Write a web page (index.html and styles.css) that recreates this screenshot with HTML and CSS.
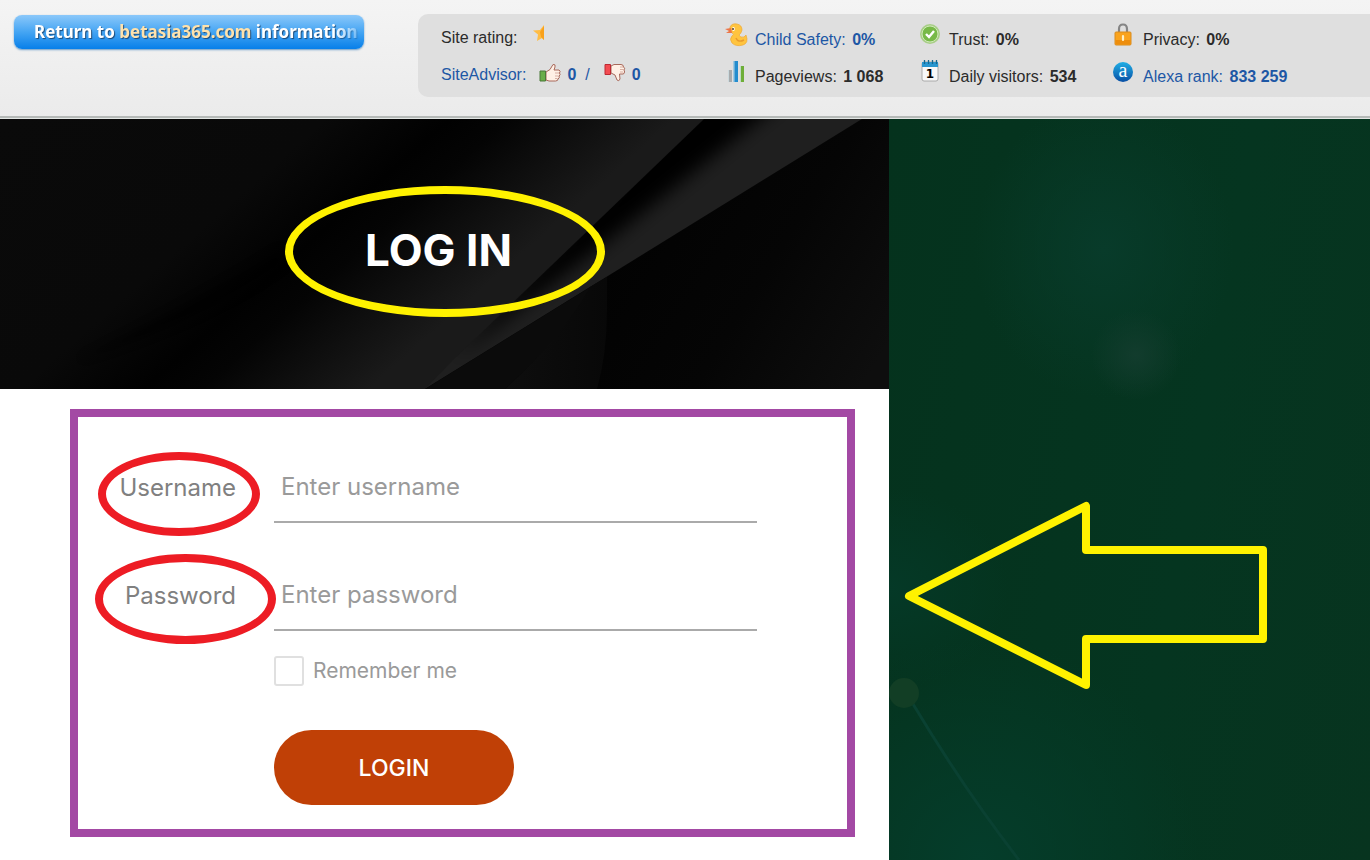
FILE: index.html
```html
<!DOCTYPE html>
<html lang="en">
<head>
<meta charset="utf-8">
<title>Log in</title>
<meta name="viewport" content="width=device-width, initial-scale=1">
<link rel="stylesheet" href="styles.css">
</head>
<body>
<header class="topbar">
  <a class="return-link" href="#"><span class="return-text">Return to <span class="domain">betasia365.com</span> information</span></a>
  <div class="stats">
    <div class="column">
      <div class="line">Site rating:
        <svg class="star" width="14" height="18" viewBox="0 0 14 18"><path d="M1 6.500 8 6 12 1V16L10 14 5 17 6 10.500Z" fill="#ffbd45"/><path d="M8 8 12 2V16L9 13Z" fill="#f9a11b"/></svg>
      </div>
      <div class="line advisor"><a href="#">SiteAdvisor:</a>
        <svg class="thumb" width="22" height="20" viewBox="0 0 22 20"><path d="M7 9 11 6.500 14 1.500Q17 1 16 4L15 7H20Q22 8 20.500 10Q22 12 20 13Q21 15 19 16Q19 18 16.500 18H10L7 17Z" fill="#fff0e5" stroke="#a8695b"/><path d="M16 10H20M16 13H19.500M16 15.500H18.500" stroke="#c69487" stroke-width=".7"/><path d="M1 8H6.500V18H1Z" fill="#69ae48" stroke="#4b7939"/></svg>
        <a href="#"><b>0</b></a><a class="slash" href="#">/</a>
        <svg class="thumb" width="22" height="20" viewBox="0 0 22 20"><path d="M7 3 10 1.500H17Q19.500 1.500 19.500 4Q21.500 5 20 7Q21.500 9 19.500 11H15.500L16 16Q15 19 13 17L11 12 7 10Z" fill="#fff0e5" stroke="#a8695b"/><path d="M16 4H19M16 6.500H19.500M16 9H19" stroke="#c69487" stroke-width=".7"/><path d="M1 1.500H6.500V11.500H1Z" fill="#f34b51" stroke="#bd2932"/></svg>
        <a href="#"><b>0</b></a>
      </div>
    </div>
    <div class="column">
      <div class="line">
        <svg class="icon" width="24" height="24" viewBox="0 0 24 24"><path d="M5 4Q7 0 12 1Q17 2 17 7Q16 11 14 12Q15 15 19 14L21 12Q24 20 18 22Q11 24 7 20Q4 16 7 13Q10 11 7 10Q4 8 5 4Z" fill="#ffc43f" stroke="#eea936" stroke-width=".7"/><path d="M11 15Q13 20 19 17" fill="none" stroke="#e99b2d" stroke-width="1.500"/><path d="M6 5 0 6 4 8 1 10 7 10Z" fill="#ec7648"/><ellipse cx="8.500" cy="6" rx="1.300" ry="2" fill="#fff"/><circle cx="8" cy="6" r="1" fill="#573b2d"/></svg>
        <a href="#">Child Safety: <b>0%</b></a>
      </div>
      <div class="line">
        <svg class="icon" width="24" height="24" viewBox="0 0 24 24"><path d="M3 10H7V22H3Z" fill="#a7abad"/><path d="M8.500 1H13V22H8.500Z" fill="#238cce"/><path d="M15 6H19V22H15Z" fill="#6eae38"/><path d="M3.500 10V22M9 1V22M15.500 6V22" stroke="#d6e5ea" stroke-width=".8"/></svg>
        <span>Pageviews: <b>1 068</b></span>
      </div>
    </div>
    <div class="column">
      <div class="line">
        <svg class="icon" width="24" height="24" viewBox="0 0 24 24"><circle cx="11" cy="11" r="10" fill="#a8ce87"/><circle cx="11" cy="11" r="8" fill="#77b947" stroke="#d0e9b9"/><path d="m7 11 3 3 5-6" fill="none" stroke="#fff" stroke-width="2.400"/></svg>
        <span>Trust: <b>0%</b></span>
      </div>
      <div class="line">
        <svg class="icon" width="24" height="24" viewBox="0 0 24 24"><rect x="3" y="2" width="16" height="19" rx="2" fill="#f9f9f9" stroke="#aaa"/><path d="M3 2H19V7H3Z" fill="#2996cf"/><path d="M5.500 0V4M9.500 0V4M13.500 0V4M17.500 0V4" stroke="#17678f" stroke-width="1.300"/><text class="day" x="11" y="18" text-anchor="middle">1</text></svg>
        <span>Daily visitors: <b>534</b></span>
      </div>
    </div>
    <div class="column">
      <div class="line">
        <svg class="icon" width="24" height="24" viewBox="0 0 24 24"><path d="M6 11V6Q6 1.500 10 1.500T14 6V11" fill="none" stroke="#858585" stroke-width="2.200"/><rect x="2" y="9" width="16" height="13" rx="1" fill="#faa31d" stroke="#d88b1f"/><path d="M2.500 17H17.500V21.500H2.500Z" fill="#ed8d0c"/><path d="M10 13V17" stroke="#fff0c5" stroke-width="2.200" stroke-linecap="round"/></svg>
        <span>Privacy: <b>0%</b></span>
      </div>
      <div class="line">
        <svg class="icon" width="24" height="24" viewBox="0 0 24 24"><defs><linearGradient id="alexa" x2="0" y2="1"><stop stop-color="#20aee5"/><stop offset="1" stop-color="#084fa5"/></linearGradient></defs><circle cx="10" cy="12" r="10" fill="url(#alexa)"/><text class="alexa-letter" x="10" y="17" text-anchor="middle">a</text></svg>
        <a href="#">Alexa rank: <b>833 259</b></a>
      </div>
    </div>
  </div>
</header>
<main class="page">
  <section class="login">
    <div class="hero">
      <svg class="hero-art" viewBox="0 0 889 270" preserveAspectRatio="none" aria-hidden="true">
        <defs>
          <linearGradient id="base" gradientUnits="userSpaceOnUse" x1="0" y1="0" x2="317" y2="360"><stop stop-color="#0a0a0a"/><stop offset=".45" stop-color="#090909"/><stop offset=".62" stop-color="#010101"/><stop offset=".7" stop-color="#040404"/><stop offset=".93" stop-color="#1a1a1a"/><stop offset="1" stop-color="#1a1a1a"/></linearGradient>
          <linearGradient id="low" gradientUnits="userSpaceOnUse" x1="620" y1="120" x2="860" y2="270"><stop stop-color="#020202"/><stop offset=".5" stop-color="#050505"/><stop offset="1" stop-color="#0e0e0e"/></linearGradient>
          <linearGradient id="fold"><stop stop-color="#0e0e0e"/><stop offset="1" stop-color="#080808"/></linearGradient>
          <clipPath id="band-shape"><path d="M704 0H862L425 270 454 240Z"/></clipPath>
          <filter id="soft" x="-20%" y="-20%" width="140%" height="140%"><feGaussianBlur stdDeviation="9"/></filter>
          <filter id="softer" x="-20%" y="-20%" width="140%" height="140%"><feGaussianBlur stdDeviation="4"/></filter>
        </defs>
        <path d="M0 0H889V270H0Z" fill="url(#base)"/>
        <path d="M80 240Q200 180 280 130L285 145Q210 200 80 240Z" fill="#020202" opacity=".6" filter="url(#softer)"/>
        <g clip-path="url(#band-shape)">
          <path d="M400 0H889V270H400Z" fill="#1f1f1f"/>
          <path d="M690-20H785L610 120 454 240Z" fill="#000" filter="url(#soft)"/>
        </g>
        <path d="M862 0H889V270H425Z" fill="url(#low)"/>
        <path d="M600 162 425 270H505Q560 220 600 162Z" fill="#0b0b0b"/>
        <path d="M505 270Q560 220 590 168L607 158V190Q607 235 597 270Z" fill="url(#fold)"/>
      </svg>
      <h1 class="title">LOG IN<span class="ring ring-title"></span></h1>
    </div>
    <form class="form">
      <label class="label" for="username">Username<span class="ring ring-user"></span></label>
      <input class="field" id="username" type="text" placeholder="Enter username">
      <label class="label" for="password">Password<span class="ring ring-pass"></span></label>
      <input class="field" id="password" type="password" placeholder="Enter password">
      <label class="remember"><input class="check" type="checkbox">Remember me</label>
      <button class="submit" type="submit">LOGIN</button>
    </form>
  </section>
  <aside class="backdrop">
    <svg class="scene" width="481" height="741" viewBox="0 0 481 741" aria-hidden="true">
      <path d="M24 585Q75 670 130 741" stroke="#0a4132" stroke-width="3" fill="none"/>
      <circle cx="15" cy="574" r="15" fill="#123e25"/>
      <path d="M20 477 197 387V431H374V520H197V566Z" fill="none" stroke="#fff200" stroke-width="8" stroke-linejoin="round"/>
    </svg>
  </aside>
</main>
</body>
</html>
```
FILE: styles.css
```css
* { box-sizing: border-box; }
body {
  margin: 0;
  min-height: 100vh;
  display: flex;
  flex-direction: column;
  font-family: "Liberation Sans", Arial, sans-serif;
  font-size: 16px;
  color: #2b2b2b;
}
a { color: #1d57a5; text-decoration: none; }

.topbar {
  display: flex;
  align-items: flex-start;
  gap: 54px;
  padding: 14px 0 19px 14px;
  background: linear-gradient(#f4f4f4, #ebebeb);
  border-bottom: 2px solid #b5b9b7;
  box-shadow: 0 1px #e2e6e4;
  margin-bottom: 1px;
}
.return-link {
  flex: 0 0 350px;
  margin-top: 1px;
  padding: 0 4px 0 20px;
  height: 34px;
  border-radius: 8px;
  background: linear-gradient(#8bc8fa, #45a5f3 50%, #077fe9);
  box-shadow: 0 1px 2px #6a9cc8;
  font: bold 17px/34px "Noto Sans", sans-serif;
  color: #fff;
  text-shadow: 1px 1px 1px #1c4a78;
  white-space: nowrap;
}
.return-text {
  display: block;
  mask-image: linear-gradient(to right, #000 92%, transparent 102%);
}
.domain { color: #ffe2ac; }
.stats {
  flex: 1;
  display: grid;
  grid-template-columns: 284px 194px 194px auto;
  padding: 5px 0 4px 23px;
  background: #dfdfdf;
  border-radius: 10px 0 0 10px;
  white-space: nowrap;
}
.line {
  display: flex;
  align-items: center;
  height: 37px;
  line-height: 37px;
}
.icon { flex: none; margin: 0 6px 8px 0; }
.column:not(:first-child) .line { padding-top: 3px; }
.column:not(:first-child) b { margin-left: 2px; }
.star { margin: 0 0 10px 15px; }
.advisor b { margin-right: 9px; }
.thumb { margin: 0 6px 4px 13px; }
.slash { margin-right: 1px; }
.day { font: bold 12px "DejaVu Sans", sans-serif; }
.alexa-letter { font: 20px "Liberation Serif", serif; fill: #fff; }

.page {
  flex: 1;
  display: grid;
  grid-template-columns: 889fr 481fr;
}
.login { background: #fff; font-family: Inter, sans-serif; }
.hero {
  position: relative;
  display: flex;
  align-items: center;
  justify-content: center;
  height: 270px;
  padding: 0 12px 8px 0;
}
.hero-art { position: absolute; inset: 0; width: 100%; height: 100%; }
.title {
  position: relative;
  margin: 0;
  font-size: 44px;
  line-height: 64px;
  font-weight: 700;
  color: #fff;
}
.ring {
  position: absolute;
  border: 8px solid #ed1c24;
  border-radius: 50%;
  pointer-events: none;
}
.ring-title { width: 320px; height: 131px; left: -80px; top: -32px; border-color: #fff200; }
.ring-user { width: 162px; height: 84px; right: -24px; top: 0; }
.ring-pass { width: 181px; height: 90px; right: -40px; top: -6px; }

.form {
  display: grid;
  grid-template-columns: 158px 1fr;
  column-gap: 38px;
  margin: 20px 34px 23px 70px;
  padding: 35px 90px 24px 0;
  border: 8px solid #a349a4;
}
.label {
  position: relative;
  margin-bottom: 36px;
  text-align: right;
  font-size: 24px;
  line-height: 72px;
  color: #808080;
}
.field {
  width: 100%;
  height: 71px;
  margin-bottom: 37px;
  padding: 0 7px;
  border: 0;
  border-bottom: 2px solid #aaa;
  background: none;
  font: 24px Inter, sans-serif;
  color: #777;
}
.field::placeholder { color: #9a9a9a; opacity: 1; }
.remember {
  grid-column: 2;
  display: flex;
  align-items: center;
  gap: 9px;
  margin-top: -12px;
  font-size: 21px;
  line-height: 30px;
  color: #9a9a9a;
}
.check {
  appearance: none;
  width: 30px;
  height: 30px;
  margin: 0;
  border: 2px solid #e0e0e0;
  border-radius: 3px;
  background: #fff;
}
.submit {
  grid-column: 2;
  width: 240px;
  height: 75px;
  margin-top: 44px;
  border: 0;
  border-radius: 38px;
  background: #c04006;
  color: #fff;
  font: 500 23px Inter, sans-serif;
}
.backdrop {
  overflow: hidden;
  background:
    radial-gradient(circle 45px at 247px 236px, #123c2d, transparent),
    radial-gradient(ellipse 130px 150px at 215px 130px, #083b2a, transparent),
    radial-gradient(ellipse 220px 220px at 90px 740px, #053d2b, transparent),
    radial-gradient(ellipse 120px 100px at 0 470px, #053927, transparent),
    linear-gradient(100deg, #05321d, #053520 60%, #07341f);
}
.scene { display: block; }
```
